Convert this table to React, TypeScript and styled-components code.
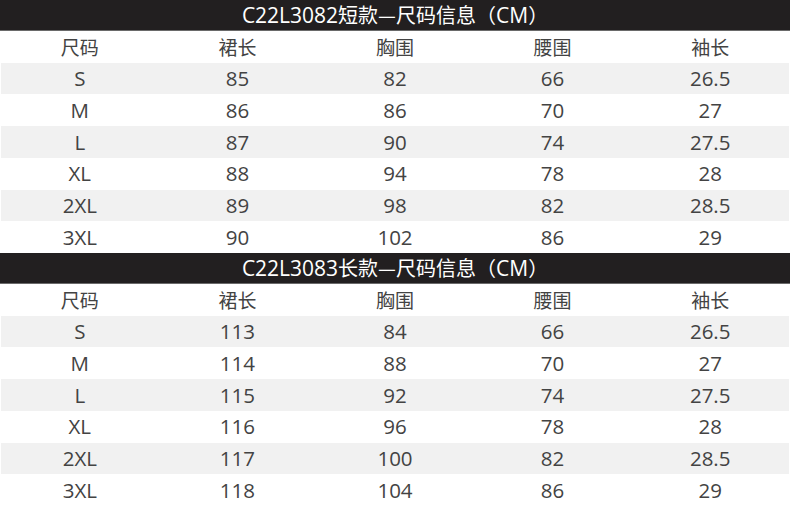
import React from "react";
import styled, { createGlobalStyle } from "styled-components";

const Global = createGlobalStyle`
  html, body { margin: 0; padding: 0; background: #ffffff; }
  body { width: 790px; height: 506px; overflow: hidden; }
`;

const Page = styled.div`
  width: 790px;
  display: flex;
  flex-direction: column;
  font-family: "Open Sans", "Noto Sans CJK SC", sans-serif;
`;

const Table = styled.section`
  display: flex;
  flex-direction: column;
  height: 253px;
`;

const Title = styled.div`
  height: 30px;
  flex: 0 0 30px;
  background: #221f20;
  border-bottom: 1px solid #6a6a6a;
  color: #ffffff;
  font-size: 21px;
  line-height: 30px;
  text-align: center;
`;

const Body = styled.div`
  flex: 1;
  display: grid;
  grid-template-rows: repeat(7, 1fr);
`;

const Row = styled.div<{ $shade: boolean }>`
  display: grid;
  grid-template-columns: repeat(5, 1fr);
  align-items: center;
  margin: 0 1px;
  background: ${(p) => (p.$shade ? "#f1f1f1" : "#ffffff")};
`;

const Cell = styled.div<{ $head?: boolean }>`
  text-align: center;
  color: #434343;
  font-size: ${(p) => (p.$head ? "19px" : "20.5px")};
  line-height: 1;
  font-family: ${(p) =>
    p.$head ? '"Noto Sans CJK SC", sans-serif' : '"Open Sans", "Noto Sans CJK SC", sans-serif'};
`;

const TitleCJK = styled.span`
  font-family: "Noto Sans CJK SC", sans-serif;
  font-size: 20px;
`;

type T = { code: string; kind: string; rows: string[][] };

const tables: T[] = [
  {
    code: "C22L3082",
    kind: "短款",
    rows: [
      ["S", "85", "82", "66", "26.5"],
      ["M", "86", "86", "70", "27"],
      ["L", "87", "90", "74", "27.5"],
      ["XL", "88", "94", "78", "28"],
      ["2XL", "89", "98", "82", "28.5"],
      ["3XL", "90", "102", "86", "29"],
    ],
  },
  {
    code: "C22L3083",
    kind: "长款",
    rows: [
      ["S", "113", "84", "66", "26.5"],
      ["M", "114", "88", "70", "27"],
      ["L", "115", "92", "74", "27.5"],
      ["XL", "116", "96", "78", "28"],
      ["2XL", "117", "100", "82", "28.5"],
      ["3XL", "118", "104", "86", "29"],
    ],
  },
];

const heads = ["尺码", "裙长", "胸围", "腰围", "袖长"];

export default function App() {
  return (
    <>
      <Global />
      <Page>
        {tables.map((t) => (
          <Table key={t.code}>
            <Title>
              {t.code}
              <TitleCJK>{t.kind}—尺码信息（</TitleCJK>CM<TitleCJK>）</TitleCJK>
            </Title>
            <Body>
              <Row $shade={false}>
                {heads.map((h) => (
                  <Cell $head key={h}>
                    {h}
                  </Cell>
                ))}
              </Row>
              {t.rows.map((r, i) => (
                <Row $shade={i % 2 === 0} key={r[0]}>
                  {r.map((c, j) => (
                    <Cell key={j}>{c}</Cell>
                  ))}
                </Row>
              ))}
            </Body>
          </Table>
        ))}
      </Page>
    </>
  );
}
